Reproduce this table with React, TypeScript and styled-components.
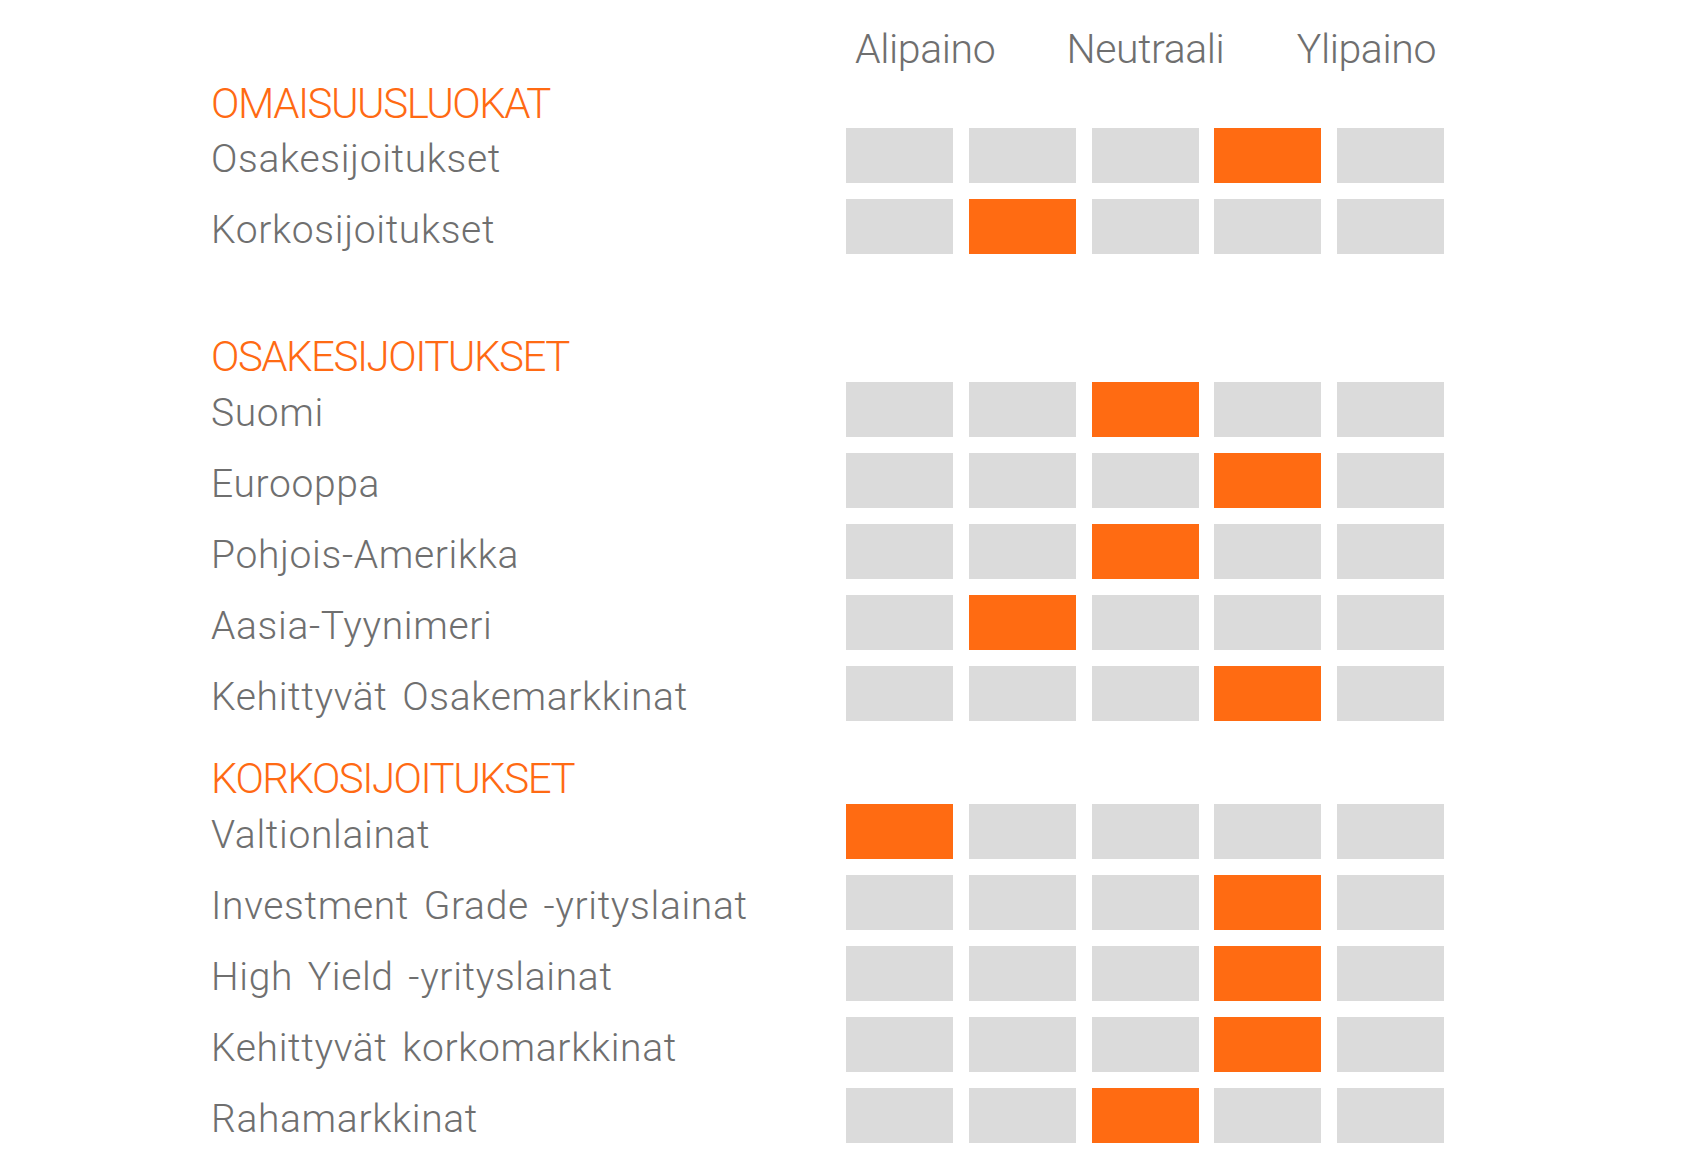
import React from "react";
import styled, { createGlobalStyle } from "styled-components";

const GlobalStyle = createGlobalStyle`
  html, body {
    margin: 0;
    padding: 0;
    background: #ffffff;
  }
  body {
    font-family: Roboto, "Noto Sans", "Liberation Sans", sans-serif;
    font-weight: 300;
    color: #6f6f6f;
  }
`;

const Page = styled.div`
  padding: 28.5px 0 0 211px;
  display: flex;
  flex-direction: column;
`;

const HeaderRow = styled.div`
  display: flex;
  height: 41px;
  margin-bottom: 13px;
`;

const LabelSpacer = styled.div`
  width: 635px;
  flex: none;
`;

const Scale = styled.div`
  width: 598px;
  padding: 0 8px 0 9px;
  box-sizing: border-box;
  display: grid;
  grid-template-columns: 1fr auto 1fr;
  font-size: 41px;
  line-height: 1;
  letter-spacing: -0.4px;
`;

const ScaleLabel = styled.span<{ $align: "start" | "center" | "end" }>`
  justify-self: ${(p) => p.$align};
  white-space: nowrap;
`;

const Section = styled.section<{ $after: number }>`
  display: flex;
  flex-direction: column;
  gap: 16px;
  margin-bottom: ${(p) => p.$after}px;
`;

const SectionTitle = styled.h2`
  margin: 0 0 -12.3px 0;
  font-size: 42px;
  line-height: 1;
  font-weight: 300;
  letter-spacing: -1.5px;
  color: #ff6a13;
  white-space: nowrap;
`;

const Row = styled.div`
  display: flex;
  height: 55px;
`;

const RowLabel = styled.div`
  width: 635px;
  flex: none;
  font-size: 39px;
  line-height: 1;
  letter-spacing: 0.65px;
  word-spacing: 4.5px;
  padding-top: 12px;
  white-space: nowrap;
`;

const Cells = styled.div`
  display: grid;
  grid-template-columns: repeat(5, 107px);
  column-gap: 15.75px;
`;

const Cell = styled.div<{ $active: boolean }>`
  height: 55px;
  background: ${(p) => (p.$active ? "#ff6b12" : "#dbdbdb")};
`;

type Item = { label: string; level: number };
type Group = { title: string; after: number; items: Item[] };

const groups: Group[] = [
  {
    title: "OMAISUUSLUOKAT",
    after: 81.6,
    items: [
      { label: "Osakesijoitukset", level: 3 },
      { label: "Korkosijoitukset", level: 1 },
    ],
  },
  {
    title: "OSAKESIJOITUKSET",
    after: 37.6,
    items: [
      { label: "Suomi", level: 2 },
      { label: "Eurooppa", level: 3 },
      { label: "Pohjois-Amerikka", level: 2 },
      { label: "Aasia-Tyynimeri", level: 1 },
      { label: "Kehittyvät Osakemarkkinat", level: 3 },
    ],
  },
  {
    title: "KORKOSIJOITUKSET",
    after: 0,
    items: [
      { label: "Valtionlainat", level: 0 },
      { label: "Investment Grade -yrityslainat", level: 3 },
      { label: "High Yield -yrityslainat", level: 3 },
      { label: "Kehittyvät korkomarkkinat", level: 3 },
      { label: "Rahamarkkinat", level: 2 },
    ],
  },
];

export default function App() {
  return (
    <>
      <GlobalStyle />
      <Page>
        <HeaderRow>
          <LabelSpacer />
          <Scale>
            <ScaleLabel $align="start">Alipaino</ScaleLabel>
            <ScaleLabel $align="center">Neutraali</ScaleLabel>
            <ScaleLabel $align="end">Ylipaino</ScaleLabel>
          </Scale>
        </HeaderRow>
        {groups.map((g) => (
          <Section key={g.title} $after={g.after}>
            <SectionTitle>{g.title}</SectionTitle>
            {g.items.map((it) => (
              <Row key={it.label}>
                <RowLabel>{it.label}</RowLabel>
                <Cells>
                  {[0, 1, 2, 3, 4].map((i) => (
                    <Cell key={i} $active={i === it.level} />
                  ))}
                </Cells>
              </Row>
            ))}
          </Section>
        ))}
      </Page>
    </>
  );
}
